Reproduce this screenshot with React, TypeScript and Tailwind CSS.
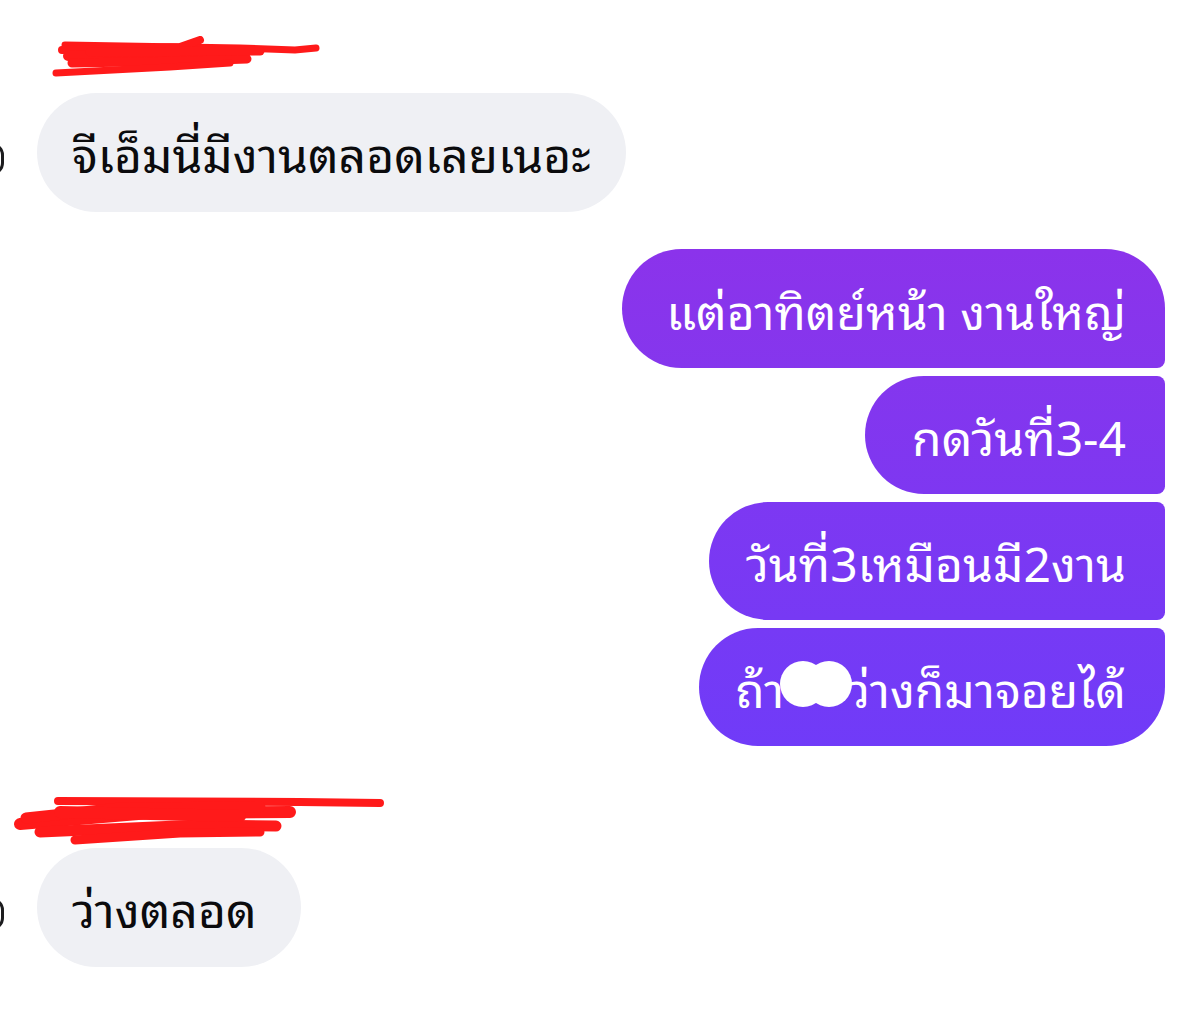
import React from "react";

function Scribble1() {
  return (
    <svg width="330" height="50" viewBox="0 0 330 50" className="block">
      <g stroke="#ff1a1a" strokeLinecap="round" fill="none">
        <path d="M65 9 L240 12 L295 14 L316 12" strokeWidth="7" />
        <path d="M62 14 L180 11 L200 4" strokeWidth="8" />
        <path d="M68 20 L200 18 L245 20" strokeWidth="10" />
        <path d="M72 27 L190 25 L247 23" strokeWidth="9" />
        <path d="M56 37 L170 31 L230 27" strokeWidth="7" />
        <path d="M90 16 L260 15" strokeWidth="9" />
      </g>
    </svg>
  );
}

function Scribble2() {
  return (
    <svg width="400" height="60" viewBox="0 0 400 60" className="block">
      <g stroke="#ff1a1a" strokeLinecap="round" fill="none">
        <path d="M58 11 L300 12 L380 13" strokeWidth="8" />
        <path d="M20 34 L150 23 L290 22" strokeWidth="12" />
        <path d="M40 42 L200 35 L276 36" strokeWidth="11" />
        <path d="M75 50 L180 43 L260 42" strokeWidth="9" />
        <path d="M26 28 L120 18 L260 17" strokeWidth="11" />
        <path d="M60 22 L240 26" strokeWidth="12" />
      </g>
    </svg>
  );
}

function LeftBubble({ text, extra }: { text: string; extra?: boolean }) {
  return (
    <div className="relative flex items-center">
      <div className="absolute left-[-20px] top-[50px] w-[24px] h-[32px] rounded-full border-[3px] border-[#1c1c1e]" />
      <div className={extra ? "ml-[37px] h-[119px] rounded-full bg-[#eff0f4] pl-[35px] pr-[44px] flex items-center text-[48px] text-[#0b0b0d] leading-none" : "ml-[37px] h-[119px] rounded-full bg-[#eff0f4] px-[35px] flex items-center text-[48px] text-[#0b0b0d] leading-none"}>
        <span className="pb-[2px]">{text}</span>
      </div>
    </div>
  );
}

export default function App() {
  return (
    <div className="w-[1189px] h-[1014px] bg-white overflow-hidden font-['Noto_Sans_Thai_Looped','Noto_Sans',sans-serif]">
      <div className="pt-[36px]">
        <Scribble1 />
      </div>
      <div className="mt-[7px]">
        <LeftBubble text="จีเอ็มนี่มีงานตลอดเลยเนอะ" />
      </div>

      <div className="mt-[37px] flex flex-col items-end gap-[8px] pr-[24px] text-white text-[48px] leading-none">
        <div className="h-[119px] bg-gradient-to-b from-[#8b33eb] to-[#8536ed] flex items-center pl-[44px] pr-[39px] rounded-l-[60px] rounded-tr-[60px] rounded-br-[8px]">
          แต่อาทิตย์หน้า งานใหญ่
        </div>
        <div className="h-[118px] bg-gradient-to-b from-[#8436ee] to-[#7e37f1] flex items-center pl-[47px] pr-[39px] rounded-l-[60px] rounded-r-[8px]">
          กดวันที่3-4
        </div>
        <div className="h-[118px] bg-gradient-to-b from-[#7d38f2] to-[#7739f4] flex items-center pl-[37px] pr-[39px] rounded-l-[60px] rounded-r-[8px]">
          วันที่3เหมือนมี2งาน
        </div>
        <div className="h-[118px] bg-gradient-to-b from-[#763af5] to-[#703bf8] flex items-center pl-[36px] pr-[39px] rounded-l-[60px] rounded-tr-[8px] rounded-br-[60px]">
          <span>ถ้า</span>
          <span className="relative inline-block w-[63px] h-[44px]">
            <span className="absolute left-[-4px] top-[-4px] w-[46px] h-[46px] rounded-full bg-white" />
            <span className="absolute left-[22px] top-[-4px] w-[46px] h-[46px] rounded-full bg-white" />
          </span>
          <span>ว่างก็มาจอยได้</span>
        </div>
      </div>

      <div className="mt-[44px]">
        <Scribble2 />
      </div>
      <div className="mt-[-2px]">
        <LeftBubble text="ว่างตลอด" extra />
      </div>
    </div>
  );
}
